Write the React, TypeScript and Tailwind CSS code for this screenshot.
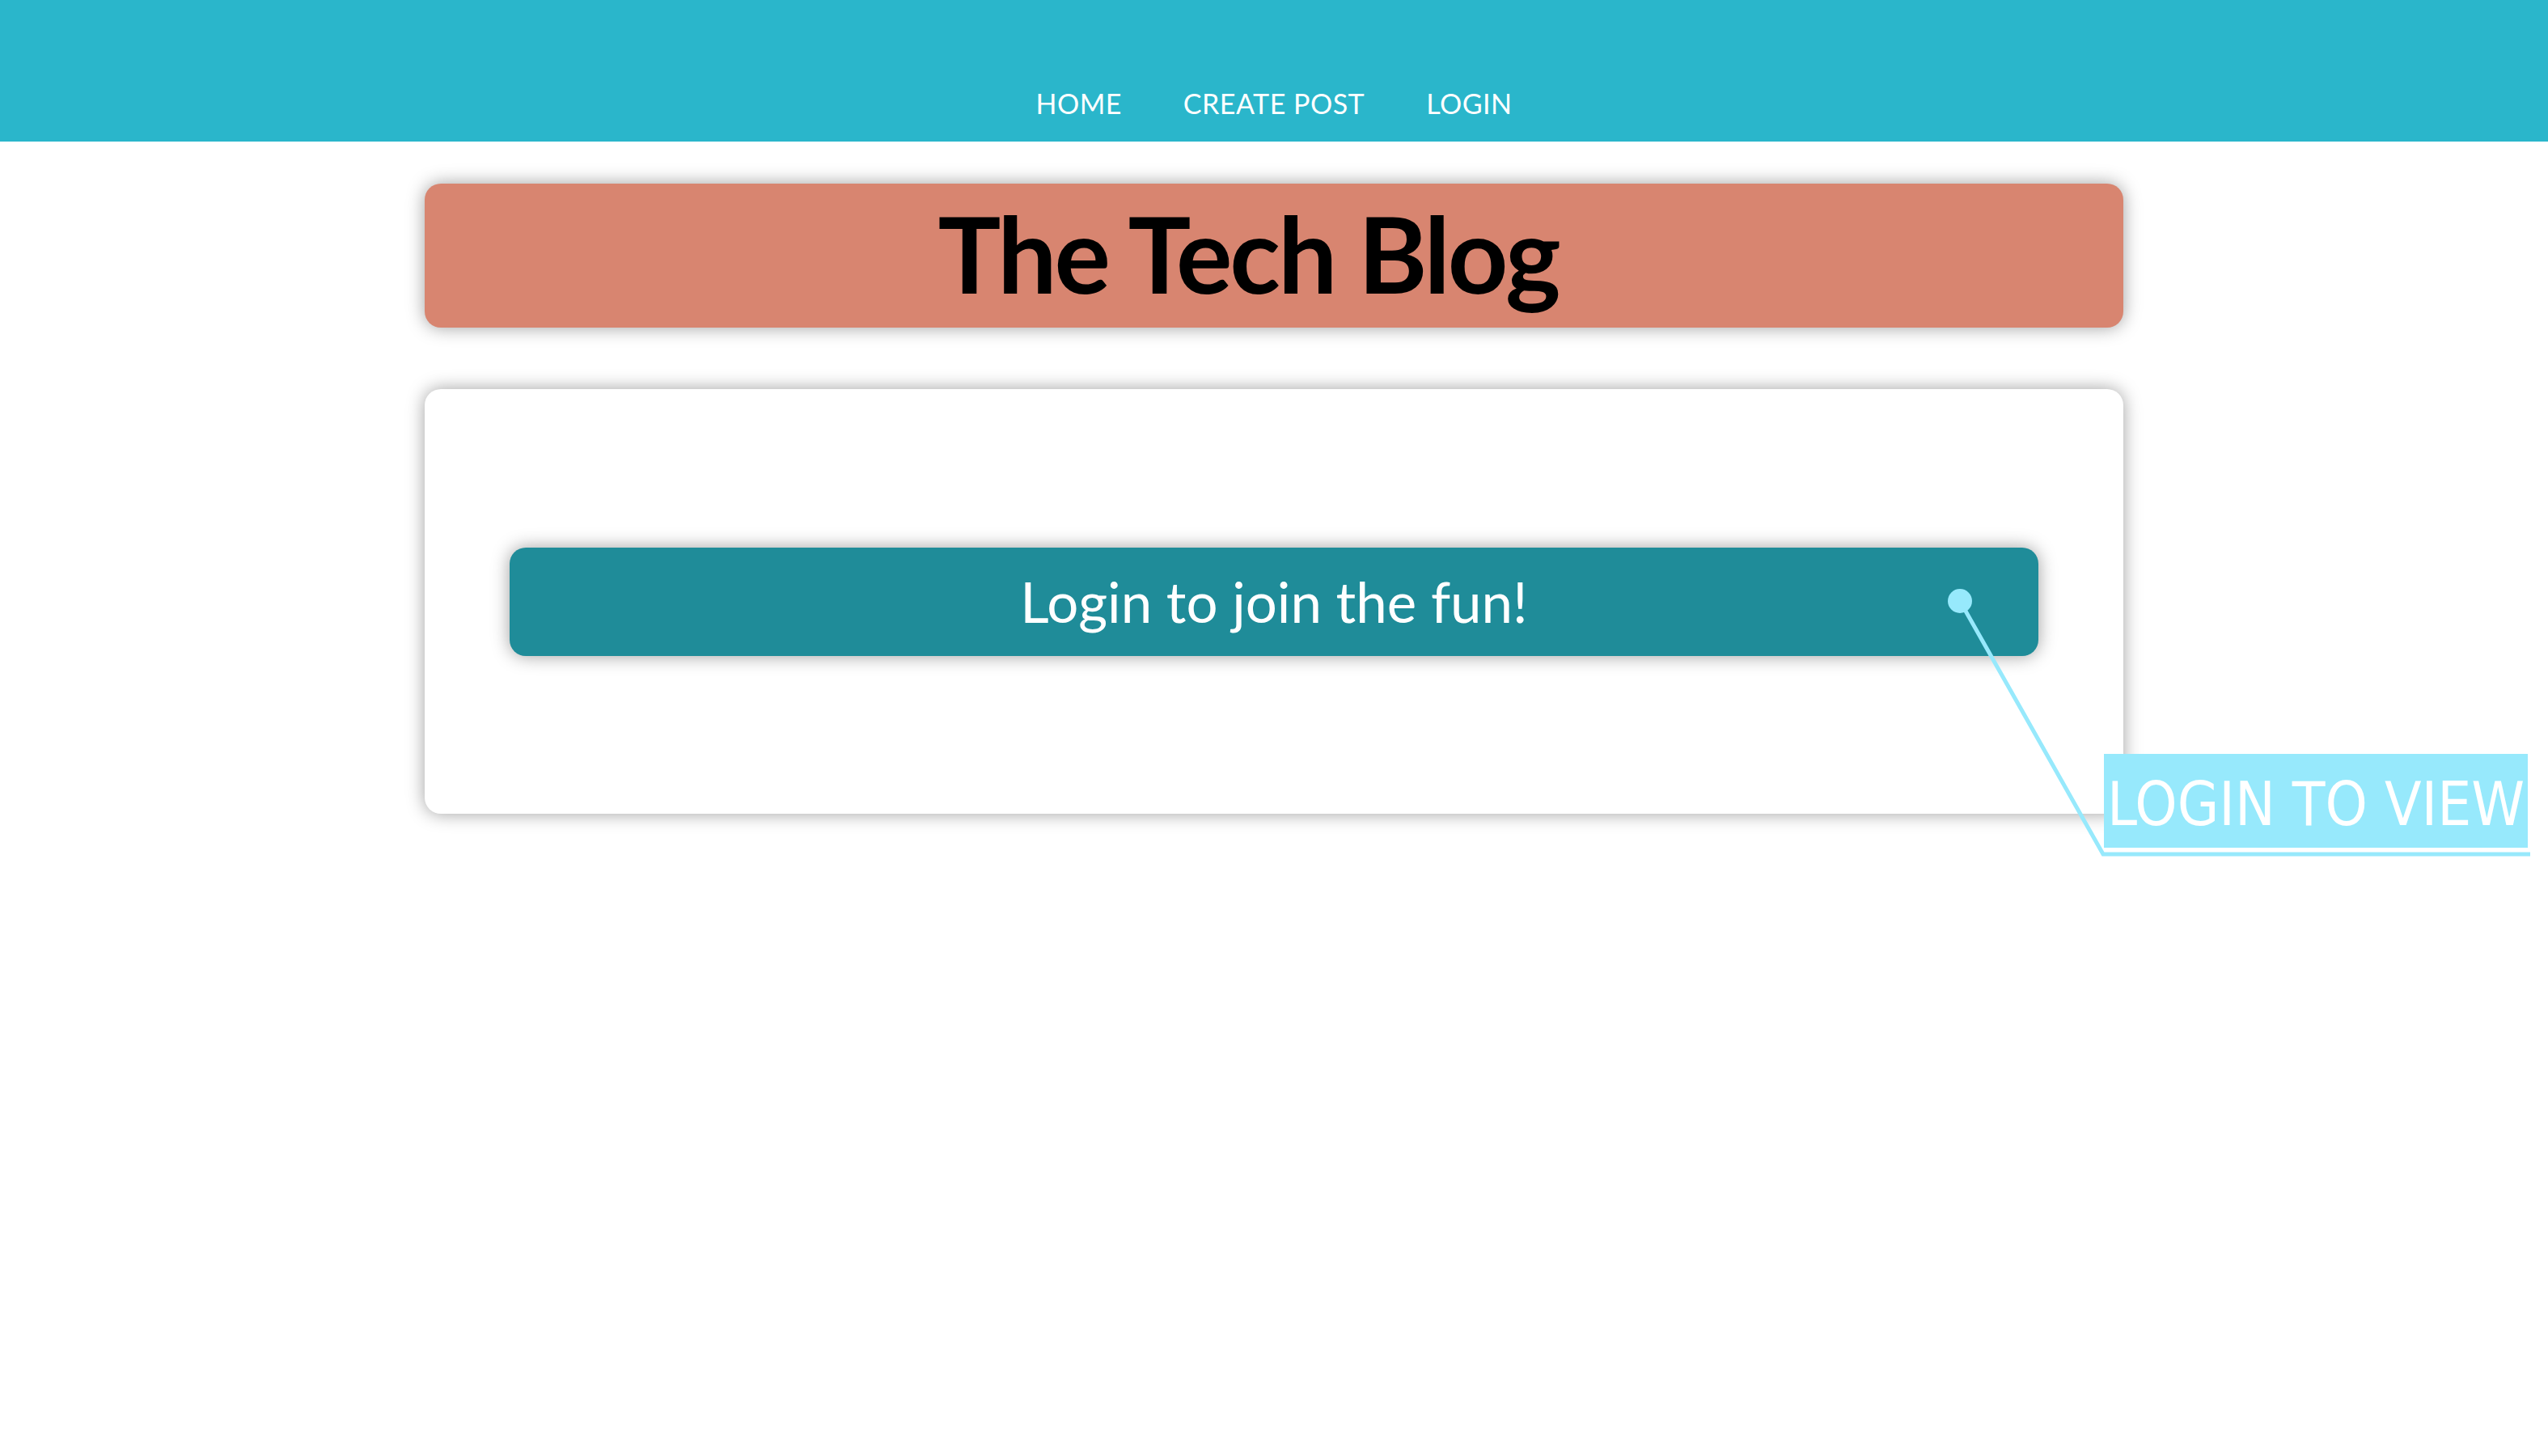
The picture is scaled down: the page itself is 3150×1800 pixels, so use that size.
export default function App() {
  const navLinks = ['HOME', 'CREATE POST', 'LOGIN']

  return (
    <div className="relative min-h-screen bg-white" style={{ fontFamily: 'Lato, "Open Sans", sans-serif' }}>
      <nav className="h-[175px] bg-[#2ab6cb] flex justify-center items-start pt-[108px] gap-[76px]">
        {navLinks.map((link) => (
          <a key={link} href="#" className="text-white text-[34px] leading-[40px] tracking-[0.5px]">
            {link}
          </a>
        ))}
      </nav>

      <main className="w-[2100px] mx-auto mt-[52px] flex flex-col gap-[76px]">
        <header className="h-[178px] rounded-[20px] bg-[#d88570] shadow-[0_0_22px_rgba(0,0,0,0.38)] flex items-center justify-center">
          <h1 className="text-[130px] font-bold text-black leading-none tracking-[-3px] pb-[6px] pr-[64px]">
            The Tech Blog
          </h1>
        </header>

        <section className="h-[525px] rounded-[20px] bg-white shadow-[0_0_22px_rgba(0,0,0,0.38)] px-[105px] flex items-center">
          <button className="w-full h-[134px] rounded-[20px] bg-[#1f8c99] shadow-[0_0_22px_rgba(0,0,0,0.38)] text-white text-[69px] leading-none">
            Login to join the fun!
          </button>
        </section>
      </main>

      {/* annotation overlay */}
      <svg className="absolute left-0 top-0 pointer-events-none" width="3150" height="1200">
        <polyline
          points="2423,743 2600,1056 3128,1056"
          fill="none"
          stroke="#97e9fc"
          strokeWidth="5"
        />
        <circle cx="2423" cy="743" r="15" fill="#97e9fc" />
      </svg>
      <div
        className="absolute left-[2601px] top-[932px] w-[524px] h-[116px] bg-[#97e9fc] text-white text-[74px] font-medium leading-none whitespace-nowrap flex items-center justify-center pt-[8px]"
        style={{
          fontFamily: '"DejaVu Sans Condensed", "Liberation Sans Narrow", "DejaVu Sans", sans-serif',
          fontStretch: 'condensed',
        }}
      >
        LOGIN TO VIEW
      </div>
    </div>
  )
}
